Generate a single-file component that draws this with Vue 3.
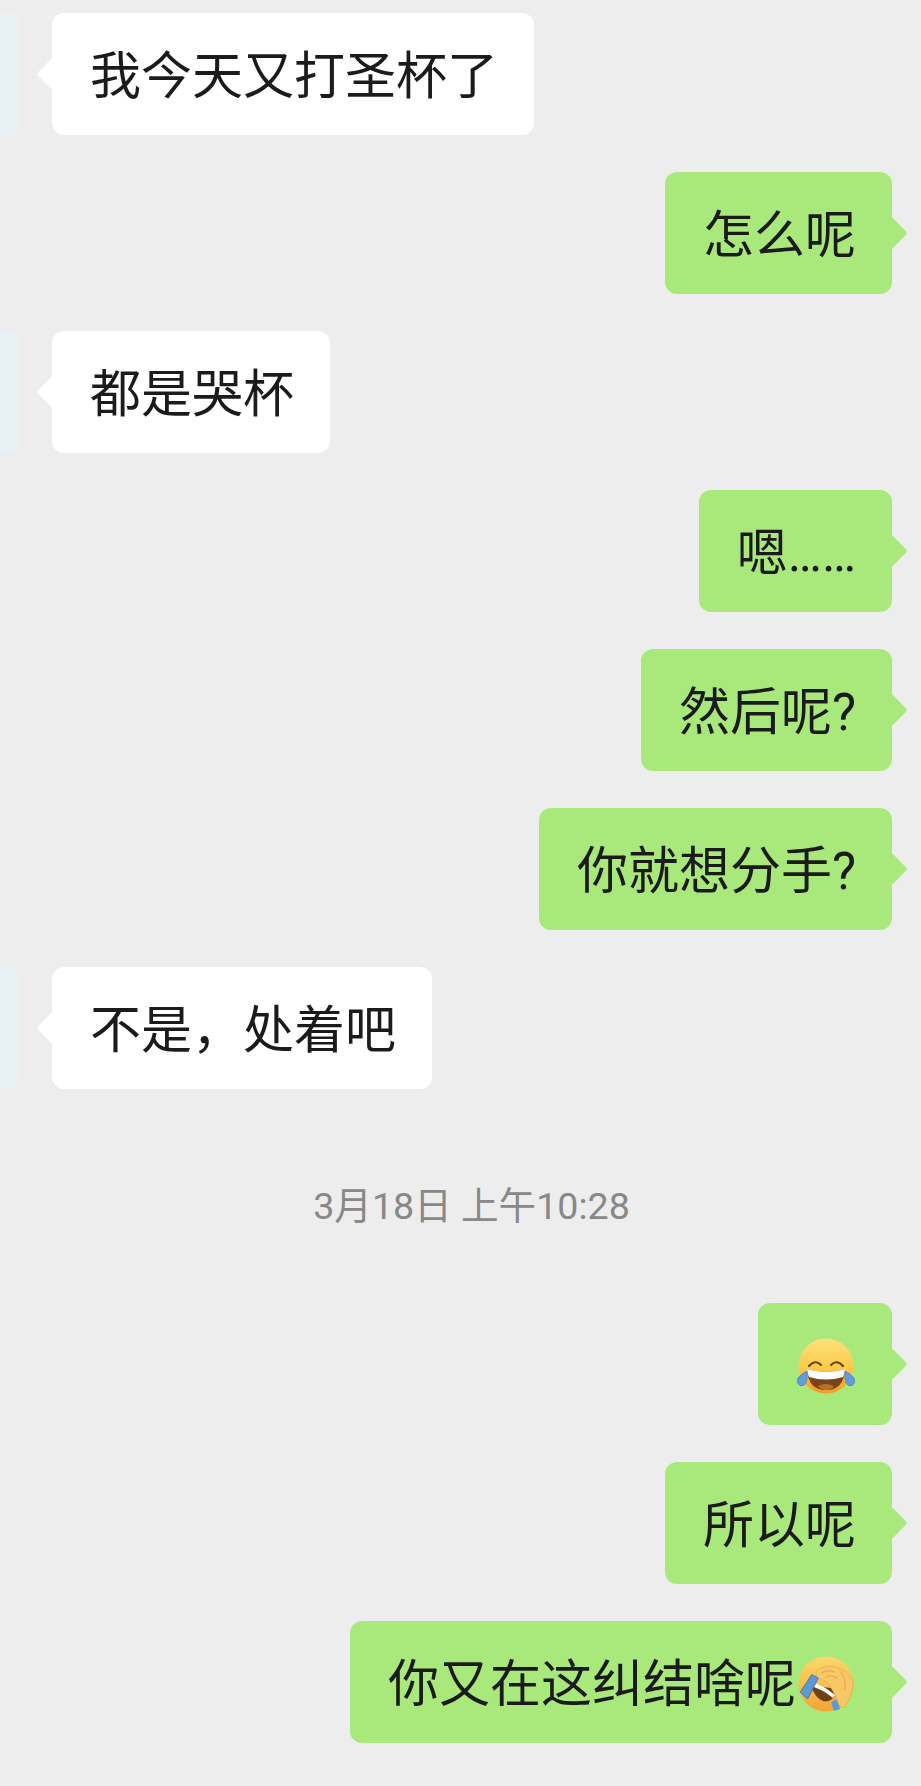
<script setup>
const rows = [
  { side: 'left', text: '我今天又打圣杯了' },
  { side: 'right', text: '怎么呢' },
  { side: 'left', text: '都是哭杯' },
  { side: 'right', text: '嗯……' },
  { side: 'right', text: '然后呢?' },
  { side: 'right', text: '你就想分手?' },
  { side: 'left', text: '不是，处着吧' },
  { time: '3月18日 上午10:28' },
  { side: 'right', emoji: 'laugh' },
  { side: 'right', text: '所以呢' },
  { side: 'right', text: '你又在这纠结啥呢', emoji: 'facepalm' }
]
</script>

<template>
  <div class="chat">
    <template v-for="(row, i) in rows" :key="i">
      <div v-if="row.time" class="time">{{ row.time }}</div>
      <div v-else class="row" :class="row.side">
        <div v-if="row.side === 'left'" class="avatar"></div>
        <div class="bubble">
          <span v-if="row.text" class="text">{{ row.text }}</span>
          <!-- face with tears of joy -->
          <svg v-if="row.emoji === 'laugh'" class="emoji" viewBox="0 0 60 60">
            <defs>
              <linearGradient id="face1" x1="0" y1="0" x2="0" y2="1">
                <stop offset="0" stop-color="#fee27a" />
                <stop offset="0.55" stop-color="#fbc94a" />
                <stop offset="1" stop-color="#f09a2c" />
              </linearGradient>
            </defs>
            <circle cx="30" cy="30" r="27.5" fill="url(#face1)" />
            <path d="M13 30q6-7 12-1M35 29q6-6 12 1" fill="none" stroke="#6e4310" stroke-width="2.2" stroke-linecap="round" />
            <path d="M11 33q19 6 38 0q-1 21-19 21t-19-21z" fill="#7a4516" />
            <path d="M11 33q19 6 38 0q0 4-2 8q-17 5-34 0q-2-4-2-8z" fill="#fff" />
            <path d="M22 50q8-4 16 0q-3 4-8 4t-8-4z" fill="#b9702c" />
            <path d="M11 35q-6 3-9 7q-2 5 2 7.500q5 1 6.500-4q1-5 .5-10.500zM49 35q6 3 9 7q2 5-2 7.500q-5 1-6.500-4q-1-5-.5-10.500z" fill="#5f9ede" stroke="#4378ad" stroke-width="0.7" />
          </svg>
          <!-- face with hand over the eyes -->
          <svg v-if="row.emoji === 'facepalm'" class="emoji" viewBox="0 0 60 60">
            <defs>
              <linearGradient id="face2" x1="0" y1="0" x2="0" y2="1">
                <stop offset="0" stop-color="#fdd86a" />
                <stop offset="1" stop-color="#f2a535" />
              </linearGradient>
            </defs>
            <circle cx="30" cy="30" r="27.5" fill="url(#face2)" />
            <path d="M15 32q4 12 12 15q7 2 12-5l-4-8z" fill="#6f4216" />
            <path d="M15 28q12 3 24 13l-2 3q-11-9-22-12z" fill="#fff" />
            <path d="M15.700 20.600l6.600 3.400l-10.600 21l-7.400-6.700z" fill="#5a9ad8" stroke="#3b6a98" stroke-width="0.8" />
            <path d="M35 48l6-3l3 10l-6 2z" fill="#5a9ad8" />
            <path d="M20 17.300q5-4 10-5q8-1 15 2.700q9 4 11.700 11.700q1 7-1.700 13.300q-2 8-6.700 13.300q-3 1-5-1.700l-3.300-8.300q-2-6-5-10q-3-5-6.700-6.700q-4-1-6.600-3.300q-2-3-1.700-6z" fill="#f9c866" stroke="#e3a546" stroke-width="0.6" />
            <path d="M25 19q7-4 13-1M30 23q6-3 11 1M45 18q5 7 4 17" fill="none" stroke="#dc9c44" stroke-width="0.9" stroke-linecap="round" />
          </svg>
        </div>
      </div>
    </template>
  </div>
</template>

<style>
body {
  background: #ededed;
}
</style>

<style scoped>
.chat {
  width: 921px;
  height: 1786px;
  overflow: hidden;
  box-sizing: border-box;
  background: #ededed;
  padding: 13px 29px 0 0;
  display: flex;
  flex-direction: column;
  font-family: Roboto, "Noto Sans CJK SC", sans-serif;
}

.row {
  display: flex;
  margin-bottom: 37px;
}

.row.right {
  justify-content: flex-end;
}

.avatar {
  width: 18px;
  height: 122px;
  border-radius: 0 8px 8px 0;
  background: #e8f2f6;
  margin-right: 34px;
}

.bubble {
  position: relative;
  height: 122px;
  box-sizing: border-box;
  padding: 0 36px 0 38px;
  display: flex;
  align-items: center;
  border-radius: 12px;
  font-size: 51px;
  color: #1b1b1b;
  background: #fff;
}

.right .bubble {
  background: #a9e97c;
}

.bubble::before {
  content: "";
  position: absolute;
  top: 50%;
  width: 23px;
  height: 23px;
  border-radius: 3px;
  background: inherit;
  transform: translateY(-50%) rotate(45deg);
}

.left .bubble::before {
  left: -11px;
}

.right .bubble::before {
  right: -11px;
}

.text {
  position: relative;
  top: -2px;
}

.emoji {
  position: relative;
  top: 2px;
  width: 60px;
  height: 60px;
  flex-shrink: 0;
}

.time {
  text-align: center;
  font-size: 37.6px;
  color: #888;
  height: 60px;
  line-height: 60px;
  margin: 50px 0 67px;
  padding-left: 51px;
}
</style>
